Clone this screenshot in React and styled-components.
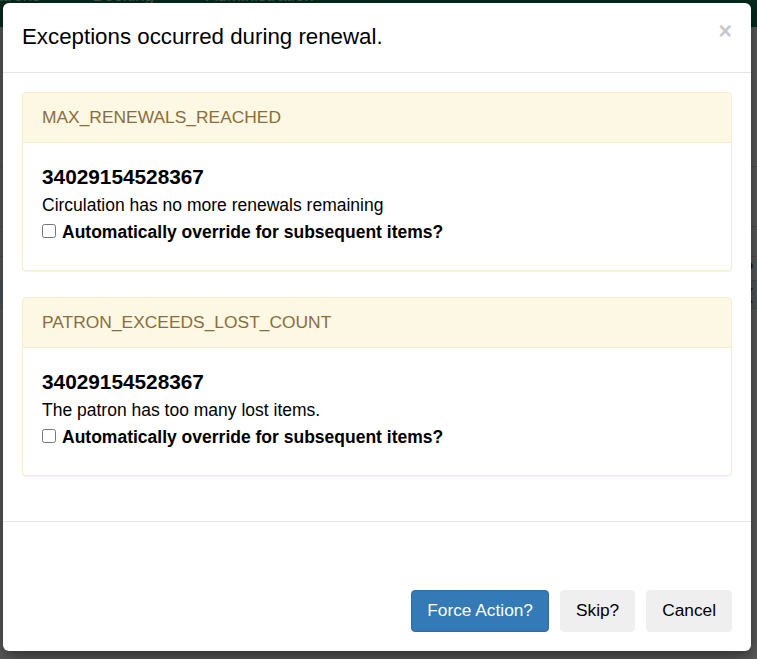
import React from "react";
import styled, { createGlobalStyle } from "styled-components";

const GlobalStyle = createGlobalStyle`
  html, body {
    margin: 0;
    padding: 0;
    height: 100%;
    overflow: hidden;
  }
  body {
    font-family: "Liberation Sans", Arial, Helvetica, sans-serif;
    color: #000;
  }
  * {
    box-sizing: border-box;
  }
`;

const Page = styled.div`
  position: relative;
  width: 100vw;
  height: 100vh;
  background: #fff;
  overflow: hidden;
`;

const NavBar = styled.nav`
  display: flex;
  align-items: flex-start;
  gap: 52px;
  height: 27px;
  background: #0d7a50;
  overflow: hidden;
`;

const NavLink = styled.span`
  margin-top: -13px;
  color: #c9e2d6;
  font-size: 17px;
  line-height: 17px;
  &:first-child {
    margin-left: -18px;
  }
`;

const Table = styled.div`
  display: flex;
  flex-direction: column;
  margin-top: 100px;
`;

const Row = styled.div`
  display: flex;
  align-items: center;
  justify-content: space-between;
  height: ${p => p.$h}px;
  border-bottom: 1px solid #ddd;
  background: ${p => (p.$shade ? "#e6f0f7" : "#fff")};
`;

const Cell = styled.span`
  color: #1e5a96;
  font-size: 17px;
  font-weight: 600;
  padding: 0 4px;
`;

const Backdrop = styled.div`
  position: absolute;
  inset: 0;
  background: rgba(0, 0, 0, 0.643);
`;

const ModalLayer = styled.div`
  position: absolute;
  inset: 0;
  display: flex;
  padding: 3px 0 0 3px;
`;

const Dialog = styled.div`
  display: flex;
  flex-direction: column;
  width: 748px;
  height: 648px;
  background: #fff;
  border-radius: 6px;
  box-shadow: 0 5px 15px rgba(0, 0, 0, 0.5);
`;

const Header = styled.div`
  display: flex;
  align-items: center;
  justify-content: space-between;
  height: 70px;
  padding: 0 19px;
  border-bottom: 1px solid #e5e5e5;
`;

const Title = styled.h4`
  margin: 0;
  font-size: 22.3px;
  font-weight: 400;
  line-height: 1.1;
  color: #000;
`;

const Close = styled.button`
  align-self: flex-start;
  margin-top: 17px;
  padding: 0;
  border: 0;
  background: transparent;
  color: #c8c8c8;
  font-family: "Liberation Sans", Arial, sans-serif;
  font-size: 23px;
  font-weight: 700;
  line-height: 1;
`;

const Body = styled.div`
  display: flex;
  flex-direction: column;
  gap: 26px;
  padding: 19px 19px 45px;
`;

const Panel = styled.section`
  border: 1px solid #faebcc;
  border-radius: 4px;
  background: #fff;
  box-shadow: 0 1px 1px rgba(0, 0, 0, 0.05);
`;

const PanelHeading = styled.div`
  display: flex;
  align-items: center;
  height: 50px;
  padding: 0 19px;
  background: #fcf8e3;
  border-bottom: 1px solid #faebcc;
  border-radius: 3px 3px 0 0;
  color: #8a6d3b;
  font-size: 17.4px;
`;

const PanelBody = styled.div`
  display: flex;
  flex-direction: column;
  padding: 22px 19px 27px;
`;

const Barcode = styled.div`
  font-size: 20.8px;
  font-weight: 700;
  line-height: 24px;
  margin-bottom: 5px;
`;

const Message = styled.div`
  font-size: 17.5px;
  line-height: 22px;
`;

const CheckRow = styled.label`
  display: flex;
  align-items: center;
  margin-top: 5px;
  font-size: 17.5px;
  font-weight: 700;
  line-height: 22px;

  input {
    width: 14px;
    height: 14px;
    margin: 0 6px 3px 0;
  }
`;

const Footer = styled.div`
  display: flex;
  flex: 1;
  align-items: flex-end;
  justify-content: flex-end;
  gap: 11px;
  padding: 19px;
  border-top: 1px solid #e5e5e5;
`;

const Button = styled.button`
  height: 42px;
  padding: 0 15px;
  border: 1px solid ${p => (p.$primary ? "#2e6da4" : "#efefef")};
  border-radius: 4px;
  background: ${p => (p.$primary ? "#337ab7" : "#efefef")};
  color: ${p => (p.$primary ? "#fff" : "#000")};
  font-family: "Liberation Sans", Arial, sans-serif;
  font-size: 17.3px;
  line-height: 1;
`;

const exceptions = [
  {
    code: "MAX_RENEWALS_REACHED",
    barcode: "34029154528367",
    message: "Circulation has no more renewals remaining",
  },
  {
    code: "PATRON_EXCEEDS_LOST_COUNT",
    barcode: "34029154528367",
    message: "The patron has too many lost items.",
  },
];

const App = () => (
  <Page>
    <GlobalStyle />
    <NavBar>
      <NavLink>Patrons</NavLink>
      <NavLink>Booking</NavLink>
      <NavLink>Administration</NavLink>
    </NavBar>
    <Table>
      <Row $h={40}>
        <Cell>Due</Cell>
        <Cell />
      </Row>
      <Row $h={60}>
        <Cell />
        <Cell />
      </Row>
      <Row $h={30}>
        <Cell />
        <Cell />
      </Row>
      <Row $h={24}>
        <Cell />
        <Cell>P</Cell>
      </Row>
      <Row $h={28} $shade>
        <Cell>1</Cell>
        <Cell>2(</Cell>
      </Row>
    </Table>
    <Backdrop />
    <ModalLayer>
      <Dialog>
        <Header>
          <Title>Exceptions occurred during renewal.</Title>
          <Close>×</Close>
        </Header>
        <Body>
          {exceptions.map(ex => (
            <Panel key={ex.code}>
              <PanelHeading>{ex.code}</PanelHeading>
              <PanelBody>
                <Barcode>{ex.barcode}</Barcode>
                <Message>{ex.message}</Message>
                <CheckRow>
                  <input type="checkbox" />
                  Automatically override for subsequent items?
                </CheckRow>
              </PanelBody>
            </Panel>
          ))}
        </Body>
        <Footer>
          <Button $primary>Force Action?</Button>
          <Button>Skip?</Button>
          <Button>Cancel</Button>
        </Footer>
      </Dialog>
    </ModalLayer>
  </Page>
);

export default App;
